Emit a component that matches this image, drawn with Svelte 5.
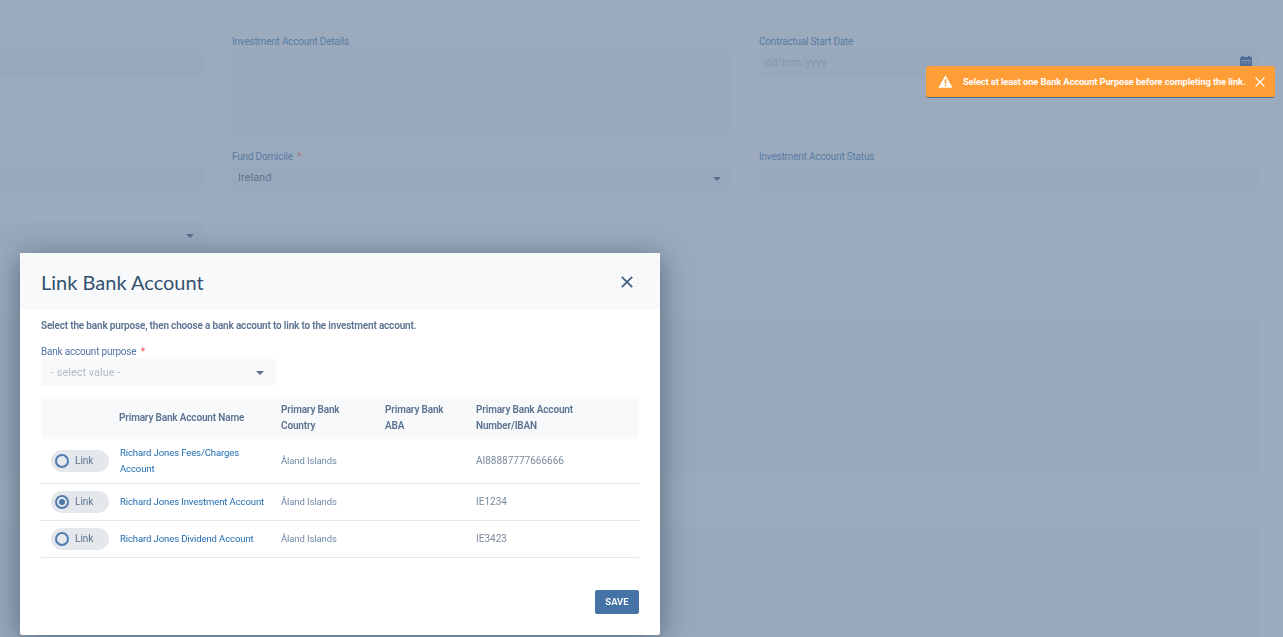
<script lang="ts">
	const accounts = [
		{ name: 'Richard Jones Fees/Charges Account', country: 'Åland Islands', iban: 'AI88887777666666', linked: false },
		{ name: 'Richard Jones Investment Account', country: 'Åland Islands', iban: 'IE1234', linked: true },
		{ name: 'Richard Jones Dividend Account', country: 'Åland Islands', iban: 'IE3423', linked: false }
	];
</script>

<div class="page">
	<div class="formGrid">
		<div class="field">
			<div class="input"></div>
		</div>
		<div class="field">
			<span class="label">Investment Account Details</span>
			<div class="textarea"></div>
		</div>
		<div class="field">
			<span class="label">Contractual Start Date</span>
			<div class="input placeholder">
				dd/mm/yyyy
				<svg class="calendar" viewBox="0 0 12 12" width="12" height="12">
					<path fill="#4f6f96" d="M2 0h2v1h4V0h2v1h1a1 1 0 0 1 1 1v9a1 1 0 0 1-1 1H1a1 1 0 0 1-1-1V2a1 1 0 0 1 1-1h1z" />
					<path fill="#97a9bf" d="M1 4h10v.8H1zM2.5 6h1.2v1.2H2.5zM5.4 6h1.2v1.2H5.4zM8.3 6h1.2v1.2H8.3z" />
				</svg>
			</div>
		</div>

		<div class="field">
			<div class="input"></div>
		</div>
		<div class="field">
			<span class="label">Fund Domicile <i>*</i></span>
			<div class="input value">Ireland<span class="caret"></span></div>
		</div>
		<div class="field">
			<span class="label">Investment Account Status</span>
			<div class="input"></div>
		</div>

		<div class="field third">
			<div class="input"><span class="caret"></span></div>
		</div>
	</div>

	<div class="panel first"></div>
	<div class="panel second"></div>
</div>

<div class="toast">
	<svg viewBox="0 0 16 14" width="15" height="13">
		<path fill="#fff" d="M8 0.3 15.7 13.7H.3z" />
		<path fill="#ff9d37" d="M7.1 4.6h1.8v4.9H7.1zM7.1 10.4h1.8v1.7H7.1z" />
	</svg>
	<span class="toastText">Select at least one Bank Account Purpose before completing the link.</span>
	<svg viewBox="0 0 10 10" width="10" height="10">
		<path d="M.5.5l9 9M9.5.5l-9 9" stroke="#fff" stroke-width="1.1" fill="none" />
	</svg>
</div>

<div class="modal">
	<header class="modalHeader">
		<h2>Link Bank Account</h2>
		<svg viewBox="0 0 12 12" width="12" height="12">
			<path d="M.8.8l10.4 10.4M11.2.8L.8 11.2" stroke="#44617f" stroke-width="1.8" fill="none" />
		</svg>
	</header>
	<div class="modalBody">
		<p class="intro">Select the bank purpose, then choose a bank account to link to the investment account.</p>
		<span class="modalLabel">Bank account purpose <i>*</i></span>
		<div class="select">- select value -<span class="selectCaret"></span></div>

		<table>
			<colgroup>
				<col style="width: 78px" />
				<col style="width: 162px" />
				<col style="width: 104px" />
				<col style="width: 91px" />
				<col />
			</colgroup>
			<thead>
				<tr>
					<th></th>
					<th>Primary Bank Account Name</th>
					<th>Primary Bank Country</th>
					<th>Primary Bank ABA</th>
					<th>Primary Bank Account Number/IBAN</th>
				</tr>
			</thead>
			<tbody>
				{#each accounts as account}
					<tr>
						<td>
							<span class="toggle">
								<span class="radio" class:checked={account.linked}></span>
								Link
							</span>
						</td>
						<td class="name">{account.name}</td>
						<td class="muted">{account.country}</td>
						<td></td>
						<td class="iban">{account.iban}</td>
					</tr>
				{/each}
			</tbody>
		</table>

		<div class="footer">
			<button class="save">SAVE</button>
		</div>
	</div>
</div>

<style>
	:global(body) {
		background-color: #9babbd;
		font-family: 'Roboto', 'Liberation Sans', sans-serif;
		overflow: hidden;
	}
	.page {
		height: 637px;
		overflow: hidden;
		padding-top: 35px;
		box-sizing: border-box;
	}
	.formGrid {
		display: grid;
		grid-template-columns: 204px 499px 500px;
		column-gap: 28px;
		align-items: end;
	}
	.field {
		display: flex;
		flex-direction: column;
		margin-bottom: 23px;
	}
	.field:nth-child(-n + 3) {
		height: 98px;
		box-sizing: border-box;
		margin-bottom: 17px;
	}
	.field:first-child {
		padding-top: 15px;
	}
	.label {
		font-size: 10px;
		line-height: 13px;
		letter-spacing: -0.2px;
		margin-bottom: 2px;
		color: #5a7ba3;
	}
	.label i {
		color: #b5707f;
		font-style: normal;
		margin-left: 2px;
	}
	.input {
		position: relative;
		height: 26px;
		line-height: 26px;
		background-color: #98a9be;
		border-radius: 2px;
		padding-left: 6px;
		font-size: 11px;
	}
	.placeholder {
		color: #8397ad;
	}
	.value {
		color: #5f7388;
	}
	.textarea {
		height: 83px;
		background-color: #98a9be;
		border-radius: 2px;
	}
	.calendar {
		position: absolute;
		right: 7px;
		top: 6px;
	}
	.caret {
		position: absolute;
		right: 10px;
		top: 12px;
		border: 4px solid transparent;
		border-top-color: #5a6f88;
		border-bottom: 0;
	}
	.third {
		grid-column: 1;
		margin-top: 8px;
	}
	.panel {
		background-color: #98a9be;
		margin-right: 24px;
		border-radius: 2px;
	}
	.first {
		height: 154px;
		margin-top: 48px;
	}
	.second {
		height: 120px;
		margin-top: 54px;
	}

	.toast {
		position: fixed;
		left: 926px;
		top: 66px;
		width: 349px;
		height: 32px;
		box-sizing: border-box;
		display: flex;
		align-items: center;
		padding-left: 12px;
		background-color: #ff9d37;
		border-bottom: 1px solid #4f6d8f;
		border-radius: 3px;
	}
	.toastText {
		margin-left: 10px;
		margin-right: 11px;
		width: 281px;
		white-space: nowrap;
		font-size: 9.3px;
		letter-spacing: -0.1px;
		font-weight: 700;
		color: #fff;
	}

	.modal {
		position: fixed;
		left: 20px;
		top: 253px;
		width: 640px;
		height: 382px;
		background-color: #fff;
		border-radius: 2px;
		box-shadow: 0 5px 30px rgba(40, 60, 80, 0.6);
	}
	.modalHeader {
		height: 57px;
		display: flex;
		align-items: center;
		justify-content: space-between;
		padding: 0 27px 0 21px;
		background-color: #f8f9fb;
	}
	h2 {
		margin: 0;
		font-family: 'Lato', sans-serif;
		font-size: 20px;
		font-weight: 400;
		color: #33506f;
	}
	.modalBody {
		padding: 0 21px;
	}
	.intro {
		margin: 0;
		padding-top: 9px;
		font-size: 10px;
		line-height: 13px;
		letter-spacing: -0.18px;
		font-weight: 600;
		color: #5b7390;
	}
	.modalLabel {
		display: block;
		margin-top: 13px;
		font-size: 10px;
		line-height: 13px;
		letter-spacing: -0.2px;
		color: #4f76a3;
	}
	.modalLabel i {
		color: #f04b55;
		font-style: normal;
		margin-left: 2px;
	}
	.select {
		position: relative;
		width: 225px;
		height: 27px;
		line-height: 27px;
		margin-top: 1px;
		padding-left: 10px;
		background-color: #f8f9fb;
		border-radius: 2px;
		font-size: 11px;
		color: #b3bcc7;
	}
	.selectCaret {
		position: absolute;
		right: 12px;
		top: 12px;
		border: 4px solid transparent;
		border-top-color: #5c7188;
		border-bottom: 0;
	}
	table {
		width: 598px;
		margin-top: 11px;
		border-collapse: collapse;
		table-layout: fixed;
	}
	thead tr {
		background-color: #f8f9fb;
		height: 42px;
	}
	th {
		text-align: left;
		font-size: 10px;
		line-height: 16px;
		letter-spacing: -0.16px;
		font-weight: 600;
		color: #5b7390;
		padding: 0 16px 0 0;
	}
	tbody tr {
		border-bottom: 1px solid #e4e7ec;
		height: 37px;
	}
	tbody tr:first-child {
		height: 44px;
	}
	td {
		padding: 0 8px 0 0;
		font-size: 10px;
		line-height: 16px;
	}
	.toggle {
		display: flex;
		align-items: center;
		gap: 6px;
		width: 58px;
		height: 22px;
		margin-left: 10px;
		padding-left: 4px;
		box-sizing: border-box;
		background-color: #e4e7ec;
		border-radius: 11px;
		color: #5b7390;
	}
	.radio {
		width: 14px;
		height: 14px;
		box-sizing: border-box;
		border: 2px solid #4f7cae;
		border-radius: 50%;
		display: flex;
		align-items: center;
		justify-content: center;
	}
	.radio.checked::after {
		content: '';
		width: 6px;
		height: 6px;
		border-radius: 50%;
		background-color: #4a76a8;
	}
	.name {
		padding: 0 12px 0 1px;
		font-size: 9.5px;
		letter-spacing: -0.1px;
		color: #1f6cb0;
	}
	.muted {
		font-size: 9.5px;
		letter-spacing: -0.1px;
		color: #6f88a6;
	}
	.iban {
		color: #7b8a9b;
	}
	.footer {
		display: flex;
		justify-content: flex-end;
		margin-top: 32px;
	}
	.save {
		width: 44px;
		height: 24px;
		border: 0;
		padding: 0;
		background-color: #4573a6;
		border-radius: 2px;
		color: #fff;
		font-family: inherit;
		font-size: 9.5px;
		font-weight: 600;
	}
</style>
